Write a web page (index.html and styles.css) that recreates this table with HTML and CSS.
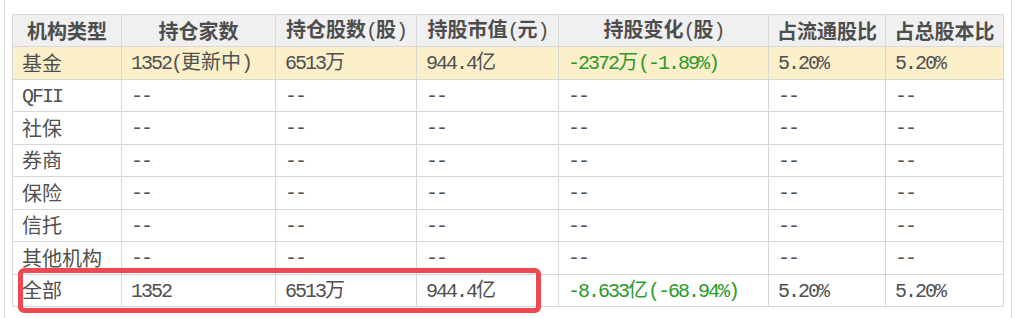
FILE: index.html
```html
<!DOCTYPE html>
<html lang="zh-CN">
<head>
<meta charset="utf-8">
<title>机构持股</title>
<link rel="stylesheet" href="styles.css">
</head>
<body>
<div class="frame">
  <div class="wrap">
    <table class="holdings">
      <colgroup>
        <col class="c1"><col class="c2"><col class="c3"><col class="c4"><col class="c5"><col class="c6"><col class="c7">
      </colgroup>
      <thead>
        <tr>
          <th>机构类型</th>
          <th>持仓家数</th>
          <th>持仓股数<span class="p">(</span>股<span class="p">)</span></th>
          <th>持股市值<span class="p">(</span>元<span class="p">)</span></th>
          <th>持股变化<span class="p">(</span>股<span class="p">)</span></th>
          <th>占流通股比</th>
          <th>占总股本比</th>
        </tr>
      </thead>
      <tbody>
        <tr class="fund">
          <td>基金</td>
          <td><span class="n">1352(</span>更新中<span class="n">)</span></td>
          <td><span class="n">6513</span>万</td>
          <td><span class="n">944.4</span>亿</td>
          <td class="down"><span class="n">-2372</span>万<span class="n">(-1.89%)</span></td>
          <td><span class="n">5.20%</span></td>
          <td><span class="n">5.20%</span></td>
        </tr>
        <tr>
          <td><span class="n">QFII</span></td>
          <td><span class="n">--</span></td><td><span class="n">--</span></td><td><span class="n">--</span></td><td><span class="n">--</span></td><td><span class="n">--</span></td><td><span class="n">--</span></td>
        </tr>
        <tr>
          <td>社保</td>
          <td><span class="n">--</span></td><td><span class="n">--</span></td><td><span class="n">--</span></td><td><span class="n">--</span></td><td><span class="n">--</span></td><td><span class="n">--</span></td>
        </tr>
        <tr>
          <td>券商</td>
          <td><span class="n">--</span></td><td><span class="n">--</span></td><td><span class="n">--</span></td><td><span class="n">--</span></td><td><span class="n">--</span></td><td><span class="n">--</span></td>
        </tr>
        <tr>
          <td>保险</td>
          <td><span class="n">--</span></td><td><span class="n">--</span></td><td><span class="n">--</span></td><td><span class="n">--</span></td><td><span class="n">--</span></td><td><span class="n">--</span></td>
        </tr>
        <tr>
          <td>信托</td>
          <td><span class="n">--</span></td><td><span class="n">--</span></td><td><span class="n">--</span></td><td><span class="n">--</span></td><td><span class="n">--</span></td><td><span class="n">--</span></td>
        </tr>
        <tr>
          <td>其他机构</td>
          <td><span class="n">--</span></td><td><span class="n">--</span></td><td><span class="n">--</span></td><td><span class="n">--</span></td><td><span class="n">--</span></td><td><span class="n">--</span></td>
        </tr>
        <tr>
          <td>全部</td>
          <td><span class="n">1352</span></td>
          <td><span class="n">6513</span>万</td>
          <td><span class="n">944.4</span>亿</td>
          <td class="down"><span class="n">-8.633</span>亿<span class="n">(-68.94%)</span></td>
          <td><span class="n">5.20%</span></td>
          <td><span class="n">5.20%</span></td>
        </tr>
      </tbody>
    </table>
    <div class="highlight"></div>
  </div>
</div>
</body>
</html>
```

FILE: styles.css
```css
* {
  box-sizing: border-box;
}

html, body {
  margin: 0;
  padding: 0;
  background: #ffffff;
}

body {
  font-family: "Noto Sans CJK SC", "Noto Sans", sans-serif;
}

.frame {
  margin-left: 4px;
  width: 1008px;
  height: 318px;
  border-left: 1px solid #dcdcdc;
  border-right: 1px solid #dcdcdc;
  padding: 14px 7px 0 7px;
}

.wrap {
  position: relative;
  width: 992px;
}

.holdings {
  width: 992px;
  border-collapse: collapse;
  table-layout: fixed;
  font-size: 20px;
  color: #505050;
}

.c1 { width: 109px; }
.c2 { width: 154px; }
.c3 { width: 141px; }
.c4 { width: 142px; }
.c5 { width: 210px; }
.c6 { width: 117px; }
.c7 { width: 118px; }

.holdings th,
.holdings td {
  border: 1px solid #d8d8d8;
  white-space: nowrap;
  overflow: hidden;
  line-height: 22px;
}

.holdings th {
  height: 32px;
  padding: 0;
  background: #f0f0f0;
  color: #4d4d4d;
  font-weight: 700;
  text-align: center;
}

.holdings td {
  height: 32.5px;
  padding: 0 0 0 9px;
  text-align: left;
  font-weight: 400;
}

.holdings .fund td {
  background: #fcf0cb;
}

.holdings td.down {
  color: #2a9a2a;
}

.n,
.p {
  font-family: "Liberation Mono", monospace;
  font-size: 20px;
  letter-spacing: -2px;
  font-weight: 400;
}

.highlight {
  position: absolute;
  left: 6px;
  top: 254px;
  width: 523px;
  height: 45px;
  border: 5px solid #ec4a50;
  border-radius: 6px;
}
```
